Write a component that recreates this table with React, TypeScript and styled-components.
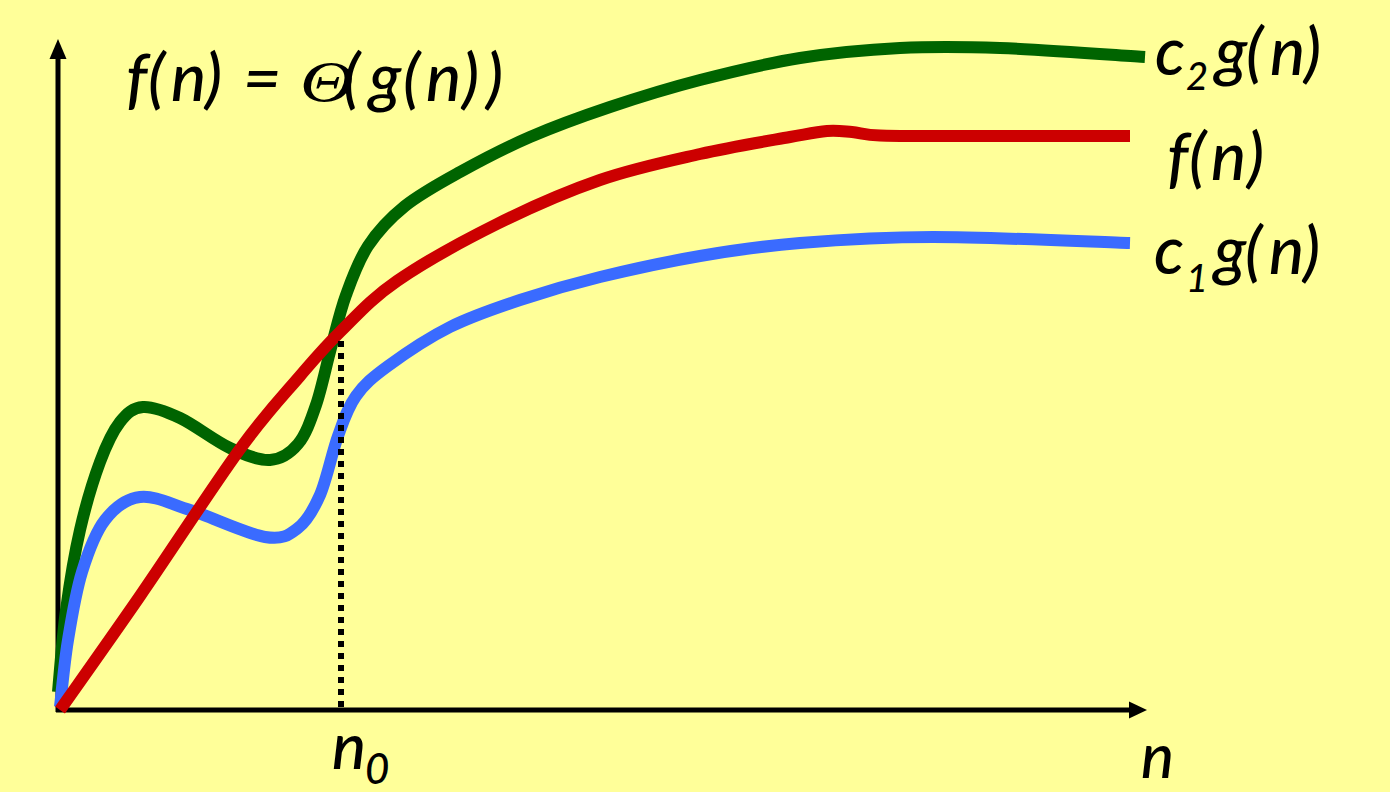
import React from "react";
import styled, { createGlobalStyle } from "styled-components";

const GlobalStyle = createGlobalStyle`
  html, body {
    margin: 0;
    padding: 0;
    background: #ffff99;
    overflow: hidden;
  }
`;

const Stage = styled.div`
  width: 1390px;
  height: 792px;
  background: #ffff99;
`;

const ChartSvg = styled.svg`
  display: block;
  width: 1390px;
  height: 792px;
`;

const Axis = styled.line`
  stroke: #000;
  stroke-width: 5;
`;

const ArrowHead = styled.polygon`
  fill: #000;
`;

const Guide = styled.line`
  stroke: #000;
  stroke-width: 6;
  stroke-dasharray: 6 6;
`;

const Curve = styled.path<{ $color: string }>`
  fill: none;
  stroke: ${(p) => p.$color};
  stroke-width: 12;
  stroke-linecap: butt;
  stroke-linejoin: round;
`;

const Label = styled.text<{ $size: number }>`
  font-family: Lato, "Open Sans", "Noto Sans", sans-serif;
  font-style: italic;
  font-weight: 500;
  font-size: ${(p) => p.$size}px;
  fill: #000;
`;

const Sub = styled.tspan<{ $size: number }>`
  font-size: ${(p) => p.$size}px;
`;

const Greek = styled.text`
  font-family: "Liberation Serif", "DejaVu Serif", serif;
  font-style: italic;
  font-weight: 400;
  font-size: 57px;
  fill: #000;
`;

type Pt = [number, number];

function smooth(pts: Pt[]): string {
  let d = `M${pts[0][0]},${pts[0][1]}`;
  for (let i = 0; i < pts.length - 1; i++) {
    const p0 = pts[i - 1] || pts[i];
    const p1 = pts[i];
    const p2 = pts[i + 1];
    const p3 = pts[i + 2] || pts[i + 1];
    const c1x = p1[0] + (p2[0] - p0[0]) / 6;
    const c1y = p1[1] + (p2[1] - p0[1]) / 6;
    const c2x = p2[0] - (p3[0] - p1[0]) / 6;
    const c2y = p2[1] - (p3[1] - p1[1]) / 6;
    d += ` C${c1x.toFixed(1)},${c1y.toFixed(1)} ${c2x.toFixed(1)},${c2y.toFixed(1)} ${p2[0]},${p2[1]}`;
  }
  return d;
}

const green: Pt[] = [
  [58, 692], [66, 610], [80, 530], [100, 462], [120, 422], [143, 407],
  [180, 418], [230, 448], [270, 460], [298, 444], [316, 405], [331, 348],
  [346, 295], [368, 246], [405, 206], [460, 172], [530, 137], [610, 107],
  [700, 80], [800, 58], [900, 48], [1000, 48], [1145, 57],
];

const red: Pt[] = [
  [60, 710], [140, 596], [240, 449], [300, 376], [340, 332], [397, 281],
  [497, 224], [600, 180], [700, 154], [790, 137], [827, 131], [852, 132],
  [880, 135.5], [950, 136], [1130, 136],
];

const blue: Pt[] = [
  [60, 707], [68, 640], [82, 572], [105, 520], [140, 497], [190, 510],
  [265, 537], [298, 528], [320, 495], [338, 436], [356, 396], [388, 366],
  [450, 327], [520, 300], [600, 277], [700, 256], [800, 243], [933, 237],
  [1130, 243],
];

const Glyphs: React.FC<{ text: string; xs: number[] }> = ({ text, xs }) => (
  <tspan x={xs.join(" ")}>{text}</tspan>
);

export default function App() {
  return (
    <Stage>
      <GlobalStyle />
      <ChartSvg viewBox="0 0 1390 792">
        <Axis x1={58} y1={56} x2={58} y2={712} />
        <ArrowHead points="58,39 49.5,59 66.5,59" />
        <Axis x1={56} y1={710} x2={1132} y2={710} />
        <ArrowHead points="1147,710 1129,701.5 1129,718.5" />

        <Curve $color="#006400" d={smooth(green)} />
        <Curve $color="#3a6bff" d={smooth(blue)} />
        <Curve $color="#cc0000" d={smooth(red)} />

        <Guide x1={341} y1={341} x2={341} y2={708} />

        <Label $size={66} y={101}>
          <Glyphs text="f(n)" xs={[126, 148, 171, 205]} />
          <Glyphs text="=" xs={[243]} />
          <Glyphs text="(g(n))" xs={[343, 369, 403, 426, 462, 486]} />
        </Label>
        <Greek transform="translate(300 101) scale(1.3 1)">Θ</Greek>

        <Label $size={66} y={75}>
          <Glyphs text="c" xs={[1155]} />
          <Sub $size={38} x={1186} dy={15}>2</Sub>
          <Sub $size={66} dy={-15}>
            <Glyphs text="g(n)" xs={[1215, 1246, 1270, 1304]} />
          </Sub>
        </Label>

        <Label $size={66} y={180}>
          <Glyphs text="f(n)" xs={[1167, 1189, 1211, 1247]} />
        </Label>

        <Label $size={66} y={274}>
          <Glyphs text="c" xs={[1154]} />
          <Sub $size={38} x={1186} dy={18}>1</Sub>
          <Sub $size={66} dy={-18}>
            <Glyphs text="g(n)" xs={[1214, 1245, 1269, 1303]} />
          </Sub>
        </Label>

        <Label $size={64} y={769}>
          <Glyphs text="n" xs={[332]} />
          <Sub $size={42} x={365} dy={15}>0</Sub>
        </Label>

        <Label $size={62} y={778}>
          <Glyphs text="n" xs={[1141]} />
        </Label>
      </ChartSvg>
    </Stage>
  );
}
